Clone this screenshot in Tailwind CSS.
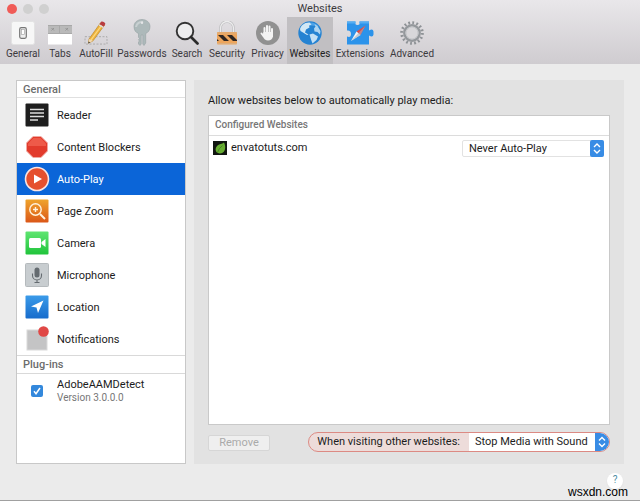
<!DOCTYPE html>
<html lang="en">
<head>
  <meta charset="UTF-8" />
  <meta name="viewport" content="width=device-width, initial-scale=1.0"/>
  <title>Websites</title>
  <script src="https://cdn.jsdelivr.net/npm/@tailwindcss/browser@4"></script>
</head>

<body class="min-h-screen flex flex-col bg-[#ebebeb] border-b border-[#a0a0a0] font-['Roboto',sans-serif] text-[11px] leading-4 text-[#1c1c1c]">

  <!-- Title bar and toolbar -->
  <header class="bg-linear-to-b from-[#e9e7ea] to-[#cfccd0] text-[#3c3a3e]">
    <div class="relative h-[17px] flex items-center">
      <div class="flex gap-[6px] pl-[7px]">
        <button type="button" aria-label="Close" class="size-[10px] rounded-full bg-[#f05b57]"></button>
        <button type="button" aria-label="Minimize" class="size-[10px] rounded-full bg-[#d0d0d0]"></button>
        <button type="button" aria-label="Zoom" class="size-[10px] rounded-full bg-[#d0d0d0]"></button>
      </div>
      <h1 class="absolute inset-x-0 top-px text-center">Websites</h1>
    </div>

    <nav class="flex pl-[2px] text-[10px] leading-3">
      <button type="button" class="w-[42px] h-[47px] pt-1 flex flex-col items-center gap-[3px]">
        <svg class="size-6 shrink-0" viewBox="0 0 24 24"><rect x=".5" y=".5" width="23" height="23" rx="2" fill="#f7f7f7" stroke="#e3e3e3"/><rect x="8.700" y="6.700" width="6.600" height="10.600" rx="1.500" fill="#eee" stroke="#777" stroke-width="1.200"/><rect x="10.500" y="8.500" width="3" height="5" fill="#fff" stroke="#999" stroke-width=".6"/></svg>
        General
      </button>
      <button type="button" class="w-[32px] h-[47px] pt-1 flex flex-col items-center gap-[3px]">
        <svg class="size-6 shrink-0" viewBox="0 0 24 24"><rect y="4" width="24" height="9" fill="#b9b9b9"/><path d="M0 4.500h24M0 12.500h24M11.500 5v7" stroke="#a8a8a8"/><path d="M3.500 7l2.500 2.500M6 7l-2.500 2.500M17.500 7l2.500 2.500M20 7l-2.500 2.500" stroke="#959595"/><rect y="13" width="24" height="10.500" fill="#fff"/></svg>
        Tabs
      </button>
      <button type="button" class="w-[40px] h-[47px] pt-1 flex flex-col items-center gap-[3px]">
        <svg class="size-6 shrink-0" viewBox="0 0 24 26" preserveAspectRatio="none"><rect x="1" y="17" width="22" height="8" fill="none" stroke="#aaa" stroke-dasharray="2 1.500"/><path d="M5 19.500L16.500 2l4 2.500L9 21.500l-4.500 2.500z" fill="#efb43d" stroke="#b9862b" stroke-width=".7"/><path d="M7 20.500L18.500 3.500" stroke="#fbd980" stroke-width="1.200"/><path d="M15.500 3.500L17 1c1-1.300 5 .8 4.200 2.500l-1.500 2.600z" fill="#b83c40"/><path d="M15 4.200l4.300 2.700" stroke="#ddd" stroke-width="1.300"/><path d="M5 19.500L9 21.500l-4.500 2.700z" fill="#f1d8b2"/><path d="M4.300 24.300l.3-2 1.500 1z" fill="#333"/></svg>
        AutoFill
      </button>
      <button type="button" class="w-[52px] h-[47px] pt-1 flex flex-col items-center gap-[3px]">
        <svg class="size-6 shrink-0 overflow-visible" viewBox="0 0 24 24"><path d="M12-1.500c4.500 0 8 2.900 8 7 0 4-2 6-4.300 7V22L14 24.500 12.800 23V14h-1.600v9L10 24.500 8.500 23v-2l1-1-1-1.200 1-1.300-1-1.200v-3.800C6 11.500 4 9.500 4 5.500c0-4.100 3.500-7 8-7z" fill="#adb9ba" stroke="#96a1a2" stroke-width=".6"/><path d="M6 6a6 5.500 0 0 1 7-5" stroke="#c8d0d1" stroke-width="2" fill="none"/><circle cx="12" cy="1.800" r="1.200" fill="#e4e5e7"/></svg>
        Passwords
      </button>
      <button type="button" class="w-[38px] h-[47px] pt-1 flex flex-col items-center gap-[3px]">
        <svg class="size-6 shrink-0" viewBox="0 0 24 24"><circle cx="10" cy="10" r="8.300" fill="#ededee" stroke="#333" stroke-width="1.900"/><path d="M16 16l6.500 6.500" stroke="#2b2b2b" stroke-width="2.700" stroke-linecap="round"/></svg>
        Search
      </button>
      <button type="button" class="w-[42px] h-[47px] pt-1 flex flex-col items-center gap-[3px]">
        <svg class="size-6 shrink-0" viewBox="0 0 24 24"><path d="M5.500 11V7a6.500 6.500 0 0 1 13 0v4" fill="none" stroke="#b9b9bb" stroke-width="2.600"/><path d="M5.500 11V7a6.500 6.500 0 0 1 13 0v4" fill="none" stroke="#ececed" stroke-width="1.400"/><rect x="2" y="11" width="20" height="12.500" rx="1" fill="#eda65e"/><path d="M3 14h5l6 6H9zM12 14h5l5 5v1h-4zM2 18l2 2H2z" fill="#2e2724"/><path d="M2 12h20M2 22.500h20" stroke="#dcae7c"/></svg>
        Security
      </button>
      <button type="button" class="w-[39px] h-[47px] pt-1 flex flex-col items-center gap-[3px]">
        <svg class="size-6 shrink-0" viewBox="0 0 24 24"><circle cx="12" cy="12" r="12" fill="#919191"/><g stroke="#f3f3f3" stroke-width="2" stroke-linecap="round"><path d="M8.500 13V7M11 12V5M13.500 12V5.500M16 13V8M7.500 15L5.500 12.500"/></g><path d="M7.500 11h9.500v4.500q-1 4-5 4-3.500 0-5.500-4.500z" fill="#f3f3f3"/></svg>
        Privacy
      </button>
      <button type="button" aria-current="page" class="w-[46px] h-[47px] pt-1 flex flex-col items-center gap-[3px] bg-[#c1bfc2] text-[#222]">
        <svg class="size-6 shrink-0" viewBox="0 0 24 24"><circle cx="12" cy="12" r="11.700" fill="#2583d2"/><path d="M2 8a11 11 0 0 1 19-2q-9-4-19 2z" fill="#4fa4e8"/><path d="M2 8Q3 4 7.500 2l4-.5 2 2-2.500 1 .5 2-3.500 2-1 3 3.500 2-1.500.5-4-2.500L2.500 10z" fill="#d2e8f5"/><path d="M11.500 13.500l3.500-1 5 3-1.500 3.500-4 3.500-1.500-4z" fill="#c4e0f4"/><path d="M16.500 3l3 2 3 5-.5 3.500-2.500-2.500-3-.5-.5-3 1.500-2z" fill="#aed5f1"/></svg>
        Websites
      </button>
      <button type="button" class="w-[54px] h-[47px] pt-1 flex flex-col items-center gap-[3px]">
        <svg class="h-6 w-7 shrink-0" viewBox="0 0 28 24"><path d="M1 .5h8.500q-1 3.500 2 3.500t2-3.500H23V9.500q4-2.500 4.500 1v3q-.5 3.500-4.500 1v9H1v-8q4 1.500 4-2.500T1 9.500z" fill="#2c93ea"/><path d="M1 .5h8.500q0 1 .2 2H1zM13.500.5H23v2h-9.700z" fill="#54adf2"/><path d="M19.500 4.500L14.500 14l-4-3.500z" fill="#e24a42"/><path d="M5 20l5.500-9.500 4 3.500z" fill="#f3f4f6"/><path d="M19.500 4.500L5 20l9.500-6z" fill="#a9adb8" fill-opacity=".6"/></svg>
        Extensions
      </button>
      <button type="button" class="w-[50px] h-[47px] pt-1 flex flex-col items-center gap-[3px]">
        <svg class="size-6 shrink-0" viewBox="0 0 24 24" fill="none" stroke="#8e9296"><circle cx="12" cy="12" r="10.300" stroke-width="3" stroke-dasharray="1.800 2.245"/><circle cx="12" cy="12" r="7.700" stroke="#94989c" stroke-width="2.400"/><circle cx="12" cy="12" r="6" fill="#d8d7da" stroke="#c3c5c8"/></svg>
        Advanced
      </button>
    </nav>
  </header>

  <main class="flex-1 flex gap-2 pt-4 px-4">

    <!-- Sidebar -->
    <aside class="w-[170px] shrink-0 bg-white border border-[#c8c8c8]">
      <h2 class="h-[17px] pl-[6px] pt-px font-medium text-[#6c6c6c] border-b border-[#e0e0e0]">General</h2>
      <ul class="pt-px">
        <li><a href="#" class="h-8 pl-2 gap-2 flex items-center">
          <svg class="size-6" viewBox="0 0 24 24"><rect x=".5" y=".5" width="23" height="23" rx="1" fill="#1e1e1e"/><path d="M5 6.500h14M5 10h14M5 13.500h14M5 17h8" stroke="#ddd" stroke-width="1.500"/></svg>
          <span class="pt-px">Reader</span>
        </a></li>
        <li><a href="#" class="h-8 pl-2 gap-2 flex items-center">
          <svg class="size-6" viewBox="0 0 24 24"><path d="M8 1.500h8L22.500 8v8L16 22.500H8L1.500 16V8z" fill="#e23b2c" stroke="#f0a8a0"/><path d="M8.500 3h7L21 8.500V11H3V8.500z" fill="#ee5a49"/></svg>
          <span class="pt-px">Content Blockers</span>
        </a></li>
        <li><a href="#" aria-current="page" class="h-8 pl-2 gap-2 flex items-center bg-[#0b65d8] text-white">
          <svg class="size-6 overflow-visible" viewBox="0 0 24 24"><circle cx="12" cy="12" r="11.500" fill="#e5502e" stroke="#fbe5e2" stroke-width="1.600"/><path d="M9 7.500l8 4.500-8 4.500z" fill="#fff"/></svg>
          <span class="pt-px">Auto-Play</span>
        </a></li>
        <li><a href="#" class="h-8 pl-2 gap-2 flex items-center">
          <svg class="size-6" viewBox="0 0 24 24"><defs><linearGradient id="zoom" x2="0" y2="1"><stop stop-color="#efa42c"/><stop offset="1" stop-color="#db5718"/></linearGradient></defs><rect x=".5" y=".5" width="23" height="23" rx="1" fill="url(#zoom)"/><g fill="none" stroke="#fff3df" stroke-width="1.400"><circle cx="10.500" cy="10.500" r="5.700"/><path d="M8 10.500h5M10.500 8v5"/><path d="M15 15l5 5" stroke-width="2"/></g></svg>
          <span class="pt-px">Page Zoom</span>
        </a></li>
        <li><a href="#" class="h-8 pl-2 gap-2 flex items-center">
          <svg class="size-6" viewBox="0 0 24 24"><defs><linearGradient id="cam" x2="0" y2="1"><stop stop-color="#5fe571"/><stop offset="1" stop-color="#20c43b"/></linearGradient></defs><rect x=".5" y=".5" width="23" height="23" rx="1" fill="url(#cam)"/><rect x="4" y="7" width="12" height="10" rx="1.500" fill="#fff"/><path d="M16.500 11l4-3v8l-4-3z" fill="#fff"/></svg>
          <span class="pt-px">Camera</span>
        </a></li>
        <li><a href="#" class="h-8 pl-2 gap-2 flex items-center">
          <svg class="size-6" viewBox="0 0 24 24"><rect x=".5" y=".5" width="23" height="23" rx="1" fill="#c8cdd0" stroke="#b5babd"/><rect x="9.500" y="4.500" width="5" height="10" rx="2.500" fill="#646b70"/><path d="M7.500 10.500v2a4.500 4.500 0 0 0 9 0v-2M12 17v2.500M9.500 19.500h5" fill="none" stroke="#646b70" stroke-width="1.100"/></svg>
          <span class="pt-px">Microphone</span>
        </a></li>
        <li><a href="#" class="h-8 pl-2 gap-2 flex items-center">
          <svg class="size-6" viewBox="0 0 24 24"><defs><linearGradient id="loc" x2="0" y2="1"><stop stop-color="#3b9be9"/><stop offset="1" stop-color="#176ccc"/></linearGradient></defs><rect x=".5" y=".5" width="23" height="23" rx="1" fill="url(#loc)"/><path d="M18.500 5.500L13 18l-1.500-5.500L6 11.500z" fill="#fff"/></svg>
          <span class="pt-px">Location</span>
        </a></li>
        <li><a href="#" class="h-8 pl-2 gap-2 flex items-center">
          <svg class="size-6 overflow-visible" viewBox="0 0 24 24"><rect x="2" y="3" width="20" height="20" fill="#c4c4c5" stroke="#dadada"/><circle cx="18.500" cy="4.500" r="5.300" fill="#e04846"/></svg>
          <span class="pt-px">Notifications</span>
        </a></li>
      </ul>
      <h2 class="h-[19px] pl-[6px] pt-px font-medium text-[#6c6c6c] border-y border-[#d9d9d9]">Plug-ins</h2>
      <label class="flex items-center pl-[14px] pt-1">
        <input type="checkbox" checked class="peer sr-only" />
        <svg class="size-3 mr-[14px]" viewBox="0 0 12 12"><rect width="12" height="12" rx="2" fill="#3388dc"/><path d="M3 6.300l2 2.400L9 3" fill="none" stroke="#fff" stroke-width="1.500"/></svg>
        <span class="leading-[13px]">AdobeAAMDetect<br><span class="text-[10px] text-[#777]">Version 3.0.0.0</span></span>
      </label>
    </aside>

    <!-- Settings panel -->
    <section class="flex-1 min-w-0 flex flex-col bg-[#e2e2e2] px-[14px] pt-[13px] pb-3">
      <h2 class="pb-[6px]">Allow websites below to automatically play media:</h2>
      <div class="flex-1 bg-white border border-[#c9c9c9]">
        <table class="w-full">
          <thead>
            <tr><th colspan="2" class="h-[19px] p-0 pl-[6px] text-left text-[10px] font-medium text-[#777] border-b border-[#dcdcdc]">Configured Websites</th></tr>
          </thead>
          <tbody>
            <tr>
              <td class="h-[26px] p-0 pl-1">
                <div class="flex items-center gap-1">
                  <svg class="size-[14px]" viewBox="0 0 14 14"><rect width="14" height="14" fill="#101510"/><path d="M11 1.500c2 4 1.500 8-1 10-2.500 1.800-6 1-7-1.200C2 8 3 6 4.500 4.500 6.500 3 9 3 11 1.500z" fill="#67ad32"/><path d="M4.500 11.500q1-4 5-7" stroke="#417d21" fill="none" stroke-width=".8"/></svg>
                  <label for="site">envatotuts.com</label>
                </div>
              </td>
              <td class="p-0 pr-[5px]">
                <div class="relative w-[142px] ml-auto">
                  <select id="site" class="block appearance-none w-full h-[17px] pl-[6px] rounded-xs bg-white border border-[#e2e2e2] leading-[15px]">
                    <option>Never Auto-Play</option>
                  </select>
                  <svg class="absolute right-0 top-0 w-[14px] h-[17px] pointer-events-none" viewBox="0 0 14 17"><rect width="14" height="17" rx="2" fill="#388ce5"/><path d="M4 7l3-3 3 3M4 10l3 3 3-3" fill="none" stroke="#fff" stroke-width="1.400"/></svg>
                </div>
              </td>
            </tr>
          </tbody>
        </table>
      </div>
      <div class="pt-[7px] flex items-center justify-between">
        <button type="button" disabled class="w-[62px] h-4 mt-[2px] rounded-xs bg-[#efefef] border border-[#d6d6d6] leading-[14px] text-[#aaa]">Remove</button>
        <div class="flex items-center rounded-full border border-[#dc8a83] bg-[#eddcda] pl-2 h-5 overflow-hidden">
          <label for="others" class="mr-[9px]">When visiting other websites:</label>
          <div class="relative w-[140px]">
            <select id="others" class="block appearance-none w-full h-[18px] pl-[6px] bg-white leading-[18px]">
              <option>Stop Media with Sound</option>
            </select>
            <svg class="absolute right-0 top-0 w-[14px] h-[18px] pointer-events-none" viewBox="0 0 14 18"><rect width="14" height="18" fill="#388ce5"/><path d="M4 7.500l3-3 3 3M4 10.500l3 3 3-3" fill="none" stroke="#fff" stroke-width="1.400"/></svg>
          </div>
        </div>
      </div>
    </section>
  </main>

  <footer class="relative h-9 pt-[9px] pr-[17px] flex justify-end">
    <button type="button" aria-label="Help" class="size-4 pb-[2px] rounded-full bg-white shadow-xs text-[10px] leading-[10px] text-[#4e8ea3]">?</button>
    <p class="absolute right-3 bottom-[2px] font-['Liberation_Sans',sans-serif] text-[12px] leading-3 text-black">wsxdn.com</p>
  </footer>

</body>
</html>
